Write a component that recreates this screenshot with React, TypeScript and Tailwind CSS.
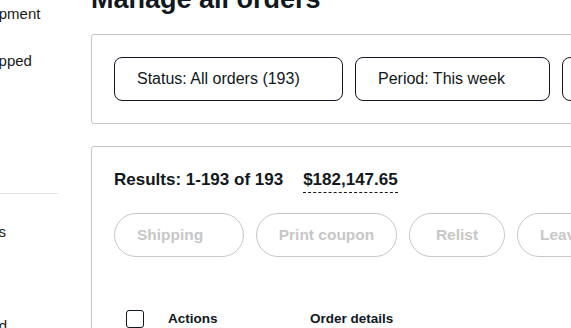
const sideTop = [
  { label: 'Awaiting shipment', shift: '' },
  { label: 'Paid and shipped', shift: '-ml-[3px]' },
  { label: 'Archived', shift: '' },
  { label: 'Unshipped', shift: '' },
];
const sideBottom = [
  { label: 'Cancellations', shift: '-ml-[3px]' },
  { label: 'Returns', shift: '' },
  { label: 'Items on hold', shift: '-ml-[2px]' },
];

const filters = [
  { label: 'Status: All orders (193)', width: 'w-[229px]' },
  { label: 'Period: This week', width: 'w-[195px]' },
  { label: 'Format: All', width: 'w-[180px]' },
];

export default function App() {
  return (
    <div className="h-[328px] w-[571px] overflow-hidden bg-white font-['Liberation_Sans',Arial,sans-serif] text-[#191919]">
      <div className="flex items-start">
        {/* Side navigation, scrolled partly out of view */}
        <nav className="-ml-[81px] -mt-[10px] w-[139px] shrink-0 text-[15px]">
          {sideTop.map((item) => (
            <div key={item.label} className={`h-[47px] whitespace-nowrap leading-[47px] ${item.shift}`}>
              {item.label}
            </div>
          ))}
          <div className="mt-[15px] h-px bg-[#e5e5e5]" />
          <div className="mt-[14px]">
            {sideBottom.map((item) => (
              <div key={item.label} className={`h-[47px] whitespace-nowrap leading-[47px] ${item.shift}`}>
                {item.label}
              </div>
            ))}
          </div>
        </nav>

        <main className="-mt-[16px] ml-[33px] w-[900px] shrink-0">
          <h1 className="mb-[20px] text-[27px] font-bold leading-[30px] text-[#111820]">
            Manage all orders
          </h1>

          {/* Filters */}
          <div className="flex gap-3 rounded-[3px] border border-[#c7c7c7] p-[22px]">
            {filters.map((f) => (
              <button
                key={f.label}
                type="button"
                className={`flex h-[44px] shrink-0 items-center rounded-[8px] border border-[#111820] pl-[22px] text-[16px] whitespace-nowrap text-[#111820] ${f.width}`}
              >
                {f.label}
              </button>
            ))}
          </div>

          {/* Results */}
          <div className="mt-[22px] rounded-[3px] border border-[#c7c7c7] px-[22px] pt-[21px] pb-[200px]">
            <div className="text-[17px] leading-[24px] font-bold whitespace-nowrap text-[#111820]">
              Results: 1-193 of 193
              <span className="ml-[20px] inline-block border-b border-dashed border-[#111820]">
                $182,147.65
              </span>
            </div>

            <div className="mt-[20px] flex gap-3 text-[15.5px] font-bold text-[#c7c7c7]">
              <button
                type="button"
                disabled
                className="flex h-[44px] w-[130px] shrink-0 items-center rounded-full border border-[#c7c7c7] pl-[22px]"
              >
                Shipping
              </button>
              <button
                type="button"
                disabled
                className="flex h-[44px] w-[141px] shrink-0 items-center justify-center rounded-full border border-[#c7c7c7] whitespace-nowrap"
              >
                Print coupon
              </button>
              <button
                type="button"
                disabled
                className="flex h-[44px] w-[96px] shrink-0 items-center justify-center rounded-full border border-[#c7c7c7]"
              >
                Relist
              </button>
              <button
                type="button"
                disabled
                className="flex h-[44px] w-[160px] shrink-0 items-center rounded-full border border-[#c7c7c7] pl-[22px] whitespace-nowrap"
              >
                Leave feedback
              </button>
            </div>

            {/* Table header */}
            <div className="mt-[52px] flex h-[20px] items-center pl-[12px] text-[13.5px] leading-[20px] font-bold text-[#111820]">
              <span className="h-[18px] w-[18px] shrink-0 rounded-[3px] border border-[#111820]" />
              <span className="ml-[24px] w-[142px]">Actions</span>
              <span>Order details</span>
            </div>
          </div>
        </main>
      </div>
    </div>
  );
}
